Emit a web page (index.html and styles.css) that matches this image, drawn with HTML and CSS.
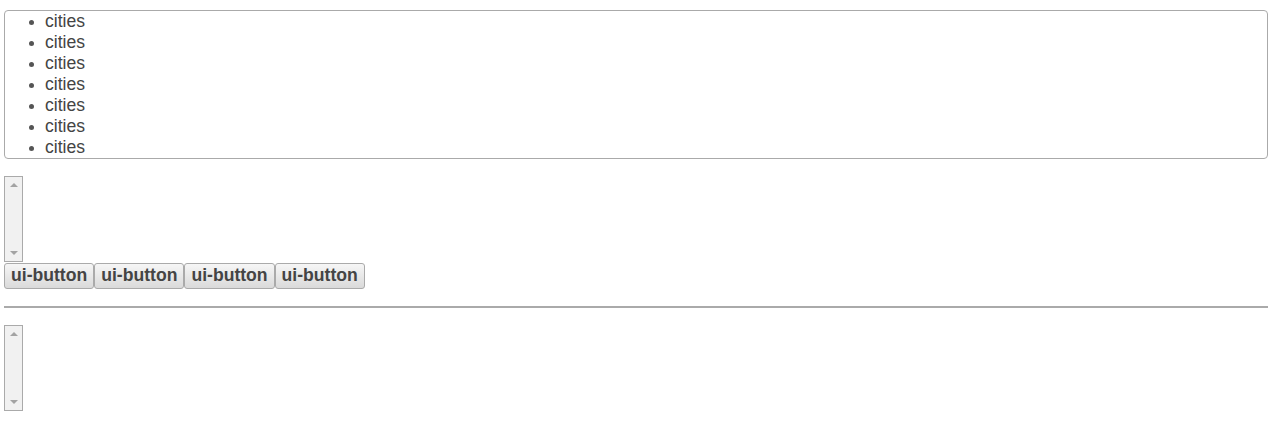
FILE: index.html
```html
<!DOCTYPE html>
<html>
<head>
<meta charset="utf-8">
<link rel="stylesheet" href="styles.css">
</head>
<body>
<div class="page">
  <ul class="list">
    <li>cities</li>
    <li>cities</li>
    <li>cities</li>
    <li>cities</li>
    <li>cities</li>
    <li>cities</li>
    <li>cities</li>
  </ul>
  <div class="scrollbox">
    <span class="arrow up"></span>
    <span class="arrow down"></span>
  </div>
  <div class="buttons">
    <button class="ui-button">ui-button</button>
    <button class="ui-button">ui-button</button>
    <button class="ui-button">ui-button</button>
    <button class="ui-button">ui-button</button>
  </div>
  <hr class="rule">
  <div class="scrollbox">
    <span class="arrow up"></span>
    <span class="arrow down"></span>
  </div>
</div>
</body>
</html>
```
FILE: styles.css
```css
html, body {
  margin: 0;
  padding: 0;
  background: #fff;
}
.page {
  padding: 10px 8px 0 4px;
  font-family: "Liberation Sans", Arial, sans-serif;
  color: #444;
  display: flex;
  flex-direction: column;
  align-items: flex-start;
}
.list {
  align-self: stretch;
  margin: 0;
  padding: 0 0 0 40px;
  border: 1px solid #aaa;
  border-radius: 4px;
  font-size: 17.6px;
  line-height: 21px;
  color: #444;
}
.list li::marker {
  color: #555;
  font-size: 16px;
}
.scrollbox {
  margin-top: 17px;
  width: 17px;
  height: 72px;
  border: 1px solid #aaa;
  background: #f1f1f1;
  display: flex;
  flex-direction: column;
  justify-content: space-between;
  align-items: center;
  padding: 6px 0;
}
.arrow {
  width: 0;
  height: 0;
  border-left: 4px solid transparent;
  border-right: 4px solid transparent;
}
.arrow.up {
  border-bottom: 4px solid #a3a3a3;
}
.arrow.down {
  border-top: 4px solid #a3a3a3;
}
.buttons {
  margin-top: 1px;
  display: flex;
  gap: 0;
}
.ui-button {
  font-family: "Liberation Sans", Arial, sans-serif;
  font-weight: bold;
  font-size: 17.6px;
  color: #444;
  height: 26px;
  padding: 0 6px 2px;
  margin: 0;
  border: 1px solid #aaa;
  border-radius: 3px;
  background: linear-gradient(#f6f6f6, #dadada);
  line-height: 20px;
}
.rule {
  align-self: stretch;
  margin: 17px 0 0;
  border: 0;
  height: 2px;
  background: #aaa;
}
```
